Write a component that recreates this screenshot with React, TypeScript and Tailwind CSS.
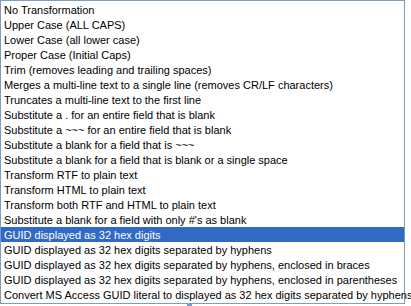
import React from 'react'

const items = [
  'No Transformation',
  'Upper Case (ALL CAPS)',
  'Lower Case (all lower case)',
  'Proper Case (Initial Caps)',
  'Trim (removes leading and trailing spaces)',
  'Merges a multi-line text to a single line (removes CR/LF characters)',
  'Truncates a multi-line text to the first line',
  'Substitute a . for an entire field that is blank',
  'Substitute a ~~~ for an entire field that is blank',
  'Substitute a blank for a field that is ~~~',
  'Substitute a blank for a field that is blank or a single space',
  'Transform RTF to plain text',
  'Transform HTML to plain text',
  'Transform both RTF and HTML to plain text',
  "Substitute a blank for a field with only #'s as blank",
  'GUID displayed as 32 hex digits',
  'GUID displayed as 32 hex digits separated by hyphens',
  'GUID displayed as 32 hex digits separated by hyphens, enclosed in braces',
  'GUID displayed as 32 hex digits separated by hyphens, enclosed in parentheses',
  'Convert MS Access GUID literal to displayed as 32 hex digits separated by hyphens',
]

const selected = 15

export default function App() {
  return (
    <div className="w-[411px] h-[306px] bg-white overflow-hidden">
      <div className="w-[405px] border border-[#7f9db9] bg-white py-[1px] font-['Liberation_Sans',Arial,sans-serif] text-[11px] text-black">
        {items.map((text, i) => (
          <div
            key={i}
            className={
              i === selected
                ? 'h-[15px] leading-[16px] pl-[3px] whitespace-nowrap bg-[#316ac5] text-white'
                : 'h-[15px] leading-[16px] pl-[3px] whitespace-nowrap'
            }
          >
            {text}
          </div>
        ))}
      </div>
      {/* edge of the control underneath the drop-down */}
      <div className="flex h-[2px]">
        <div className="ml-[187px] w-[5px] h-[2px] bg-[#7a9bd0]" />
      </div>
    </div>
  )
}
